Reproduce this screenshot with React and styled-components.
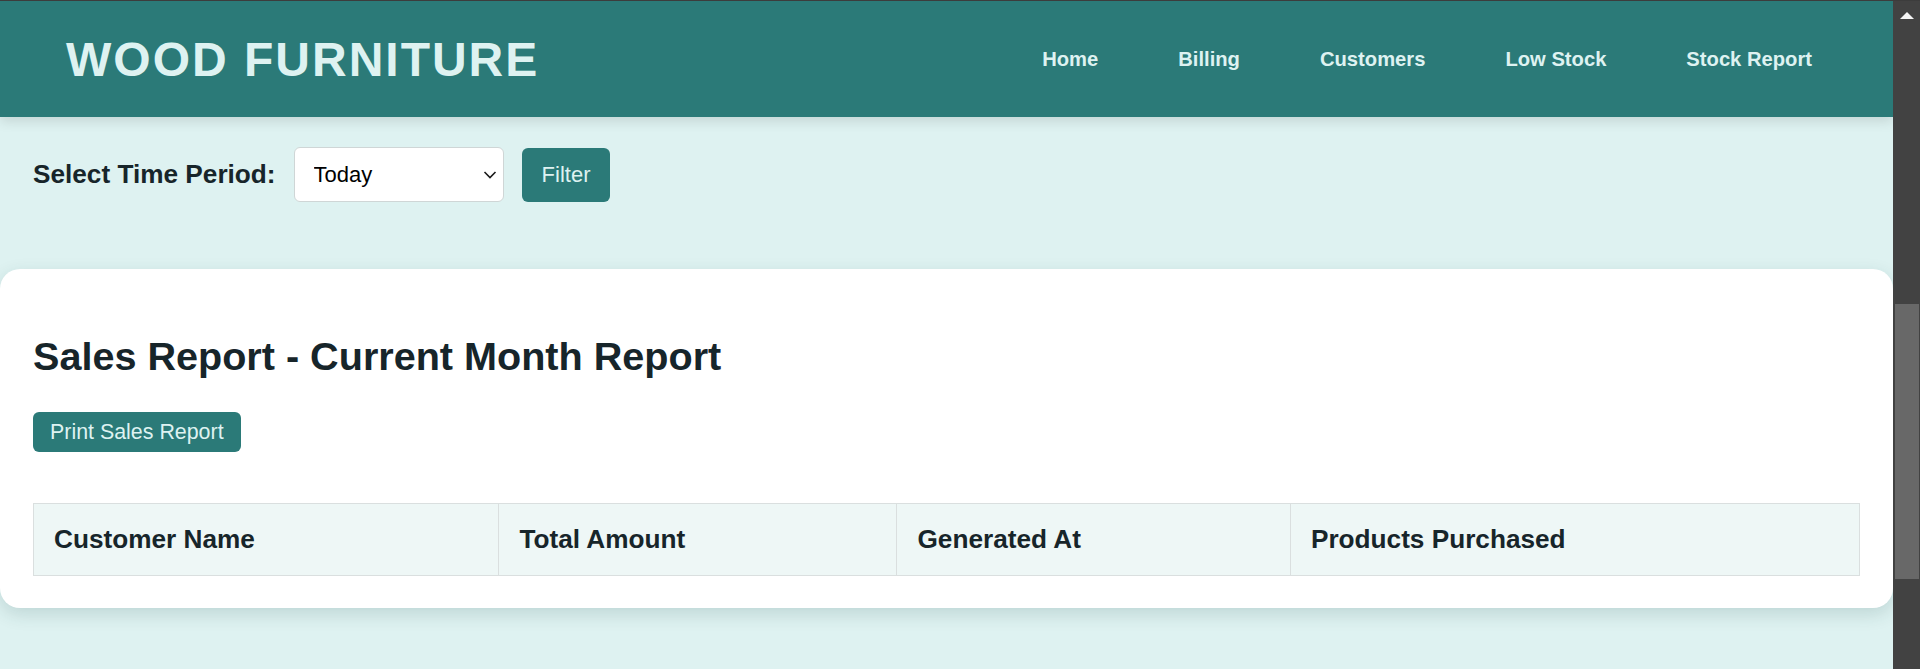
import React from 'react'
import styled, { createGlobalStyle } from 'styled-components'

const GlobalStyle = createGlobalStyle`
    body {
        margin: 0;
        font-family: "Liberation Sans", Arial, sans-serif;
        overflow: hidden;
    }
    * {
        box-sizing: border-box;
    }
`
const Frame = styled.div`
    display: flex;
    height: 669px;
    border-top: 1px solid #3c3c3c;
`
const Page = styled.div`
    flex: 1;
    min-width: 0;
    display: flex;
    flex-direction: column;
    background: #def2f1;
    overflow: hidden;
`
const Header = styled.header`
    flex-shrink: 0;
    height: 116px;
    display: flex;
    align-items: center;
    justify-content: space-between;
    padding: 0 81px 0 66px;
    background: #2b7a78;
    box-shadow: 0 4px 12px rgba(0, 0, 0, 0.12);
`
const Logo = styled.h1`
    margin: 0;
    font-size: 48px;
    font-weight: 700;
    letter-spacing: 2px;
    color: #def2f1;
`
const Nav = styled.nav`
    display: flex;
    gap: 80px;
`
const NavLink = styled.a`
    font-size: 20.2px;
    font-weight: 700;
    color: #def2f1;
    text-decoration: none;
`
const FilterRow = styled.div`
    display: flex;
    align-items: center;
    gap: 18px;
    margin-top: 30px;
    padding-left: 33px;
`
const Label = styled.label`
    font-size: 26.2px;
    font-weight: 700;
    color: #17252a;
`
const SelectWrap = styled.div`
    position: relative;
    width: 210px;
    height: 55px;
`
const Select = styled.select`
    appearance: none;
    width: 100%;
    height: 100%;
    padding: 0 30px 0 19px;
    font-family: "Liberation Sans", Arial, sans-serif;
    font-size: 22px;
    color: #000;
    background: #fff;
    border: 1px solid #cfd6d6;
    border-radius: 6px;
`
const Chevron = styled.svg`
    position: absolute;
    right: 7px;
    top: 24px;
    pointer-events: none;
`
const Button = styled.button`
    height: ${(p) => p.$h}px;
    padding: 0 ${(p) => p.$px}px;
    font-family: "Liberation Sans", Arial, sans-serif;
    font-size: ${(p) => p.$fs}px;
    color: #def2f1;
    background: #2b7a78;
    border: none;
    border-radius: 6px;
`
const Card = styled.section`
    margin-top: 67px;
    padding: 32px 33px;
    background: #fff;
    border-radius: 20px;
    box-shadow: 0 6px 18px rgba(23, 70, 70, 0.16);
`
const Title = styled.h2`
    margin: 32px 0 33px;
    font-size: 39.6px;
    line-height: 46px;
    font-weight: 700;
    color: #17252a;
`
const Table = styled.table`
    width: 100%;
    margin-top: 51px;
    border-collapse: collapse;
`
const Th = styled.th`
    padding: 20px;
    font-size: 26.2px;
    line-height: 31px;
    font-weight: 700;
    text-align: left;
    color: #17252a;
    background: #eef7f6;
    border: 1px solid #dadfdf;
`
const Scrollbar = styled.div`
    width: 27px;
    flex-shrink: 0;
    display: flex;
    flex-direction: column;
    background: #424242;
`
const Arrow = styled.div`
    align-self: center;
    margin-top: 11px;
    width: 0;
    height: 0;
    border-left: 7px solid transparent;
    border-right: 7px solid transparent;
    border-bottom: 7px solid #f4f4f4;
`
const Thumb = styled.div`
    height: 275px;
    margin: 285px 1px 0 2px;
    background: #686868;
`

const links = ['Home', 'Billing', 'Customers', 'Low Stock', 'Stock Report']
const columns = ['Customer Name', 'Total Amount', 'Generated At', 'Products Purchased']

const App = () => {
  return (
    <Frame>
        <GlobalStyle />
        <Page>
            <Header>
                <Logo>WOOD FURNITURE</Logo>
                <Nav>
                    {links.map((l) => (
                        <NavLink key={l} href="#">{l}</NavLink>
                    ))}
                </Nav>
            </Header>
            <FilterRow>
                <Label>Select Time Period:</Label>
                <SelectWrap>
                    <Select defaultValue="today">
                        <option value="today">Today</option>
                        <option value="week">This Week</option>
                        <option value="month">This Month</option>
                    </Select>
                    <Chevron width="14" height="8" viewBox="0 0 14 8">
                        <polyline points="1.5,1 7,6.5 12.5,1" fill="none" stroke="#1a1a1a" strokeWidth="1.6" />
                    </Chevron>
                </SelectWrap>
                <Button $h={54} $px={20} $fs={22}>Filter</Button>
            </FilterRow>
            <Card>
                <Title>Sales Report - Current Month Report</Title>
                <Button $h={40} $px={17} $fs={21.4}>Print Sales Report</Button>
                <Table>
                    <thead>
                        <tr>
                            {columns.map((c) => (
                                <Th key={c}>{c}</Th>
                            ))}
                        </tr>
                    </thead>
                </Table>
            </Card>
        </Page>
        <Scrollbar>
            <Arrow />
            <Thumb />
        </Scrollbar>
    </Frame>
  )
}

export default App
